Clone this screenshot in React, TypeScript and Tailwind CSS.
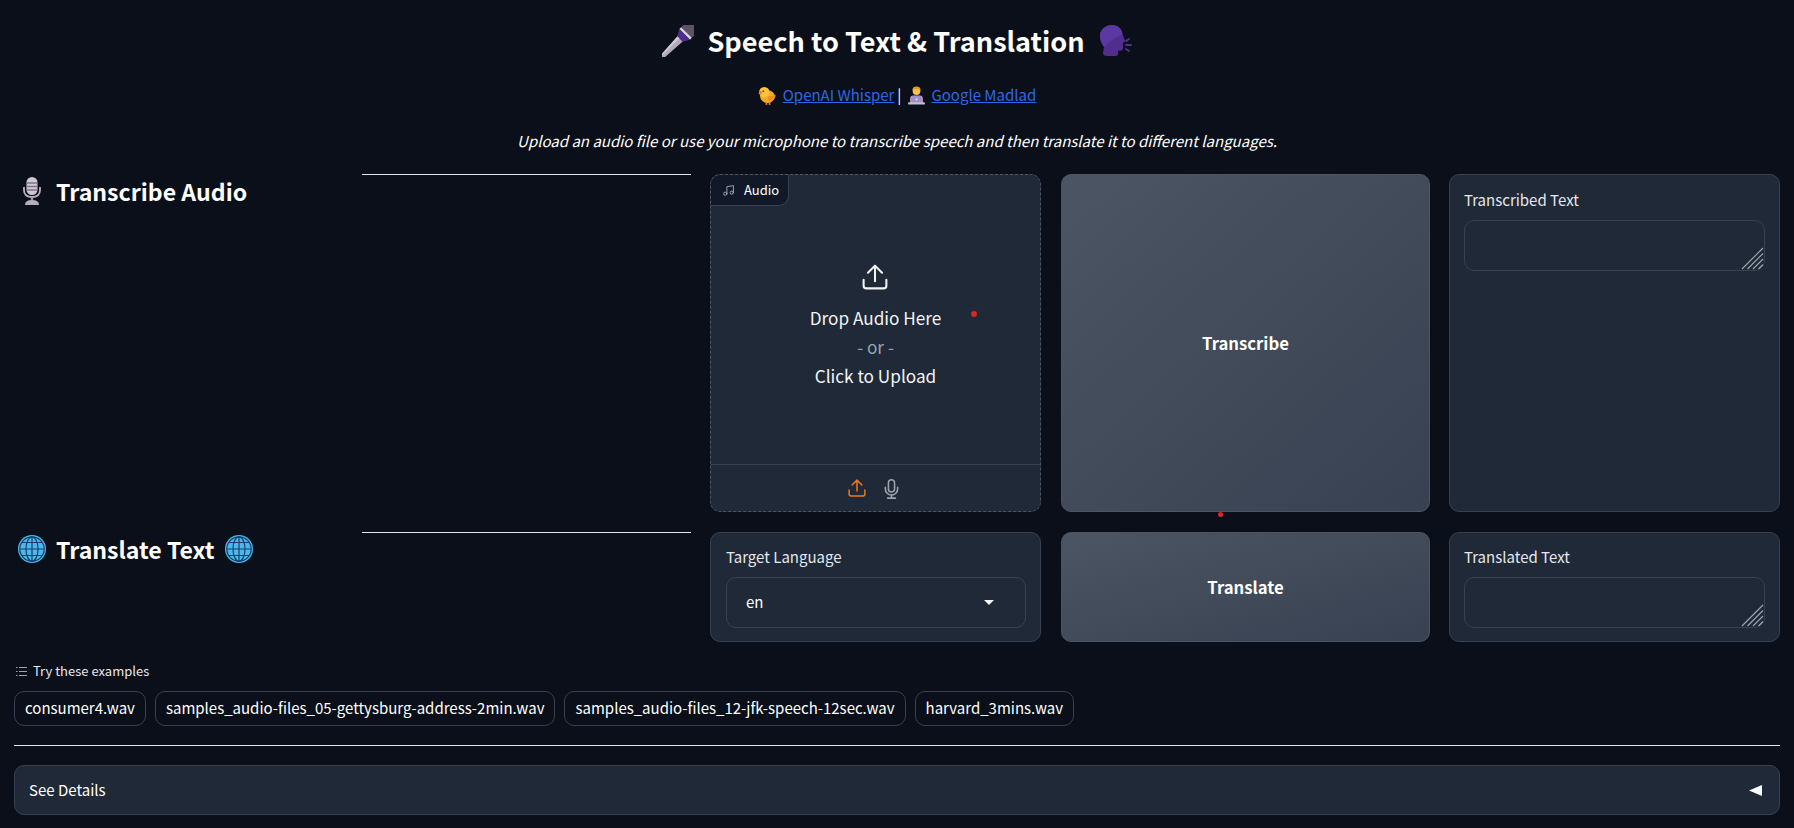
import React from "react";

const sans = "font-['Noto_Sans_CJK_SC','Noto_Sans',sans-serif]";

function StageMic() {
  return (
    <svg width="32" height="32" viewBox="0 0 32 32" className="inline-block shrink-0">
      <g transform="rotate(45 16 16)">
        <path d="M12.4 13 H19.6 L18 41 Q16 43 14 41 Z" fill="#b3a9bd" />
        <path d="M12.4 13 H15 L15 42 Q14.5 42 14 41 Z" fill="#d0cad6" />
        <path d="M8.5 -1 A7.5 8 0 0 1 23.5 -1 L23.5 4 L8.5 4 Z" fill="#5c5366" />
        <rect x="8.5" y="4" width="15" height="2.6" fill="#d8d3dc" />
        <path d="M8.5 6.6 H23.5 L20 13 H12 Z" fill="#4b2f8a" />
      </g>
    </svg>
  );
}

function SpeakingHead() {
  return (
    <svg width="34" height="32" viewBox="0 0 34 32" className="inline-block shrink-0">
      <path d="M14 0 C20 0 24 4 24.5 9 C25 12 27 14 27 16 C27 17 25 17.5 25 18 L25 23 C25 26 22 26 20 25.5 L20 29 Q20 31 16 31 L9 31 Q5 31 5 28 L6 22 C3 18 2 14 2 11 C2 4 8 0 14 0 Z" fill="#4f2e8f" />
      <path d="M14 0 C20 0 24 4 24.5 9 L16 14 C10 17 8 21 6 22 C3 18 2 14 2 11 C2 4 8 0 14 0 Z" fill="#5b38a4" />
      <path d="M28 16 L31 14 M28 20 L33 20 M28 24 L31 26" stroke="#4d3584" strokeWidth="2" strokeLinecap="round" />
    </svg>
  );
}

function Chick() {
  return (
    <svg width="19" height="19" viewBox="0 0 18 18" className="inline-block shrink-0">
      <path d="M8 15 L8 18 M11 15 L11 18" stroke="#e0712a" strokeWidth="1.6" />
      <ellipse cx="9" cy="10" rx="7" ry="6" fill="#f4a92c" />
      <circle cx="6" cy="6" r="5" fill="#fcc13d" />
      <path d="M0 7 L3 4.5 L3.5 8 Z" fill="#e0712a" />
      <path d="M9 10 C12 9 15 10 17 8 C16 13 13 15 10 14 Z" fill="#e89022" />
      <circle cx="5" cy="5" r="0.8" fill="#3a2a20" />
    </svg>
  );
}

function Technologist() {
  return (
    <svg width="19" height="19" viewBox="0 0 18 18" className="inline-block shrink-0">
      <path d="M3 17 L3 12 Q3 9 6 9 L12 9 Q15 9 15 12 L15 17 Z" fill="#d7a0b8" />
      <circle cx="9" cy="5" r="3.6" fill="#f5c04d" />
      <path d="M5 4.5 Q5 0.5 9 0.5 Q13 0.5 13 4.5 L11.5 3 L6.5 3 Z" fill="#e59a25" />
      <rect x="4" y="9.5" width="10" height="6.5" rx="0.8" fill="#9d8fc9" />
      <rect x="1" y="15.5" width="16" height="2" rx="0.8" fill="#c4bdd0" />
      <circle cx="9" cy="12.7" r="1" fill="#dcd6ea" />
    </svg>
  );
}

function StudioMic() {
  return (
    <svg width="18" height="28" viewBox="0 0 18 28" className="inline-block shrink-0">
      <rect x="3.5" y="0" width="11" height="18" rx="5.5" fill="#cfc8d3" />
      <path d="M3.5 6 H14.5 M3.5 9.5 H14.5 M3.5 13 H14.5" stroke="#7f7190" strokeWidth="1.3" />
      <path d="M1 10 V13 Q1 20 9 20 Q17 20 17 13 V10" fill="none" stroke="#b9b2be" strokeWidth="1.8" />
      <path d="M9 20 V23" stroke="#9d95a4" strokeWidth="2.4" />
      <path d="M2 28 Q2 23 9 23 Q16 23 16 28 Z" fill="#b5adbb" />
    </svg>
  );
}

function Globe() {
  return (
    <svg width="28" height="28" viewBox="0 0 28 28" className="inline-block shrink-0">
      <circle cx="14" cy="14" r="14" fill="#4cb6f1" />
      <g fill="none" stroke="#1d3f63" strokeWidth="1.2">
        <ellipse cx="14" cy="14" rx="6" ry="12.2" />
        <path d="M14 1.8 V26.2 M1.8 14 H26.2 M4 7.5 H24 M4 20.5 H24" />
        <circle cx="14" cy="14" r="12.2" />
      </g>
    </svg>
  );
}

function UploadIcon({ size, color, width, className }: { size: number; color: string; width: number; className?: string }) {
  return (
    <svg width={size} height={size} viewBox="0 0 24 24" fill="none" stroke={color} strokeWidth={width} strokeLinecap="round" strokeLinejoin="round" className={`shrink-0 ${className ?? ""}`}>
      <path d="M1.5 14.5 V20 Q1.5 22.5 4 22.5 H20 Q22.5 22.5 22.5 20 V14.5" />
      <path d="M12 16 V2 M5.5 8 L12 1.5 L18.5 8" />
    </svg>
  );
}

function ResizeHandle() {
  return (
    <svg width="23" height="23" viewBox="0 0 23 23" className="absolute right-[0px] bottom-[0px]">
      <path d="M1 22 L22 1 M6.5 22 L22 6.5 M12 22 L22 12 M17.5 22 L22 17.5" stroke="#a1a7b0" strokeWidth="1.1" />
    </svg>
  );
}

function TextPanel({ label, pad }: { label: string; pad: string }) {
  return (
    <div className={`${pad} rounded-[10px] border border-[#374151] bg-[#1f2937] px-[14px]`}>
      <div className="text-[15px] leading-[24px] text-[#e5e7eb]">{label}</div>
      <div className="relative mt-[8px] h-[51px] rounded-[10px] border border-[#374151] bg-[#1f2937]">
        <ResizeHandle />
      </div>
    </div>
  );
}

function SideHeading({ children }: { children: React.ReactNode }) {
  return (
    <div className="flex gap-4">
      <div className="flex w-[332px] shrink-0 items-start">{children}</div>
      <div className="mr-[-1px] h-[1px] flex-1 bg-[#e5e7eb]" />
    </div>
  );
}

const examples = [
  "consumer4.wav",
  "samples_audio-files_05-gettysburg-address-2min.wav",
  "samples_audio-files_12-jfk-speech-12sec.wav",
  "harvard_3mins.wav",
];

export default function App() {
  return (
    <div className={`${sans} relative h-[828px] w-[1794px] overflow-hidden bg-[#0b0f19] px-[14px] text-[15px] text-[#f3f4f6]`}>
      <h1 className="flex h-[82px] items-center justify-center gap-[13px] pb-[1px] text-[27.1px] font-semibold leading-none text-white">
        <StageMic />
        <span>Speech to Text &amp; Translation</span>
        <SpeakingHead />
      </h1>

      <div className="flex h-[26px] items-center justify-center text-[15px] text-white">
        <Chick />
        <a className="ml-[6px] text-[#3166e6] underline">OpenAI Whisper</a>
        <span className="ml-[3px] mr-[6px]">|</span>
        <Technologist />
        <a className="ml-[5px] text-[#3166e6] underline">Google Madlad</a>
      </div>

      <div className="mt-[20px] flex h-[26px] items-center justify-center text-[15px] italic text-white">
        Upload an audio file or use your microphone to transcribe speech and then translate it to different languages.
      </div>

      <div className="mt-[20px] grid grid-cols-[676px_331px_368px_331px] grid-rows-[338px_110px] gap-x-[20px] gap-y-[20px]">
        <SideHeading>
          <div className="flex items-center gap-[15px] pl-[9px] pt-[2px]">
            <StudioMic />
            <span className="text-[23.1px] font-semibold leading-[30px] text-white">Transcribe Audio</span>
          </div>
        </SideHeading>

        <div className="relative flex flex-col rounded-[10px] border border-dashed border-[#4b5563] bg-[#1f2937]">
          <div className="flex h-[31px] w-[78px] items-center gap-[9px] rounded-br-[10px] rounded-tl-[10px] border-b border-r border-[#374151] bg-[#111827] pl-[11px] text-[13px] text-white">
            <svg width="13" height="13" viewBox="0 0 24 24" fill="none" stroke="#9ca3af" strokeWidth="1.8" strokeLinecap="round" strokeLinejoin="round" className="shrink-0">
              <path d="M9 18 V5 L21 3 V16" />
              <circle cx="6" cy="18" r="3" />
              <circle cx="18" cy="16" r="3" />
            </svg>
            <span>Audio</span>
          </div>
          <div className="flex flex-1 flex-col items-center pt-[58px]">
            <UploadIcon size={26} color="#f3f4f6" width={1.9} className="mr-[2px]" />
            <div className="mt-[13px] text-[17.2px] leading-[29px] text-[#f3f4f6]">Drop Audio Here</div>
            <div className="text-[17.2px] leading-[29px] text-[#9ca3af]">- or -</div>
            <div className="text-[17.2px] leading-[29px] text-[#f3f4f6]">Click to Upload</div>
          </div>
          <div className="flex h-[47px] items-center justify-center gap-[15px] border-t border-[#374151] pr-[1px]">
            <UploadIcon size={18} color="#ea7a1f" width={2} />
            <svg width="21" height="23" viewBox="0 0 24 24" fill="none" stroke="#9ca3af" strokeWidth="1.8" strokeLinecap="round" strokeLinejoin="round" className="shrink-0">
              <path d="M12 2 a3.5 3.5 0 0 0 -3.5 3.5 v7 a3.5 3.5 0 0 0 7 0 v-7 A3.5 3.5 0 0 0 12 2 Z" />
              <path d="M19 10.5 v2 a7 7 0 0 1 -14 0 v-2" />
              <path d="M12 19.5 V23 M7.5 23 H16.5" />
            </svg>
          </div>
          <span className="absolute left-[260px] top-[136px] h-[6px] w-[6px] rounded-full bg-[#dc2626]" />
        </div>

        <button className="relative mr-[-1px] rounded-[10px] border border-[#4b5563] bg-linear-to-br from-[#4b5563] to-[#374151] pt-[2px] text-[16.7px] font-semibold text-white">
          Transcribe
          <span className="absolute bottom-[-6px] left-[156px] h-[5px] w-[5px] rounded-full bg-[#dc2626]" />
        </button>

        <TextPanel label="Transcribed Text" pad="pt-[13px]" />

        <SideHeading>
          <div className="flex items-center gap-[10px] pl-[4px] pt-[2px]">
            <Globe />
            <span className="text-[23.1px] font-semibold leading-[30px] text-white">Translate Text</span>
            <Globe />
          </div>
        </SideHeading>

        <div className="rounded-[10px] border border-[#374151] bg-[#1f2937] pl-[15px] pr-[14px] pt-[12px]">
          <div className="text-[15px] leading-[24px] text-[#e5e7eb]">Target Language</div>
          <div className="mt-[8px] flex h-[51px] items-center justify-between rounded-[10px] border border-[#374151] pl-[19px] pr-[31px] text-white">
            <span>en</span>
            <svg width="10" height="5" viewBox="0 0 10 5"><path d="M0 0 H10 L5 5 Z" fill="#f3f4f6" /></svg>
          </div>
        </div>

        <button className="mr-[-1px] rounded-[10px] border border-[#4b5563] bg-linear-to-br from-[#4b5563] to-[#374151] pt-[2px] text-[16.7px] font-semibold text-white">
          Translate
        </button>

        <TextPanel label="Translated Text" pad="pt-[12px]" />
      </div>

      <div className="mt-[19px] flex h-[20px] items-center gap-[6px] pl-[2px] text-[13px] text-[#e5e7eb]">
        <svg width="11" height="11" viewBox="0 0 11 11" fill="none" stroke="#9ca3af" strokeWidth="1">
          <path d="M3 1.5 H11 M3 5.5 H11 M3 9.5 H11 M0 1.5 H1.5 M0 5.5 H1.5 M0 9.5 H1.5" />
        </svg>
        <span>Try these examples</span>
      </div>

      <div className="mt-[10px] flex gap-[9px]">
        {examples.map((e) => (
          <div key={e} className="flex h-[35px] items-center rounded-[10px] border border-[#374151] bg-[#0b0f19] px-[10px] text-[15px] text-white">
            {e}
          </div>
        ))}
      </div>

      <div className="mt-[19px] h-[1px] bg-[#e5e7eb]" />

      <div className="mt-[19px] flex h-[50px] items-center justify-between rounded-[10px] border border-[#374151] bg-[#1f2937] pl-[14px] pr-[17px] pt-[1px] text-white">
        <span>See Details</span>
        <svg width="13" height="11" viewBox="0 0 13 11"><path d="M13 0 V11 L0 5.5 Z" fill="#f9fafb" /></svg>
      </div>
    </div>
  );
}
